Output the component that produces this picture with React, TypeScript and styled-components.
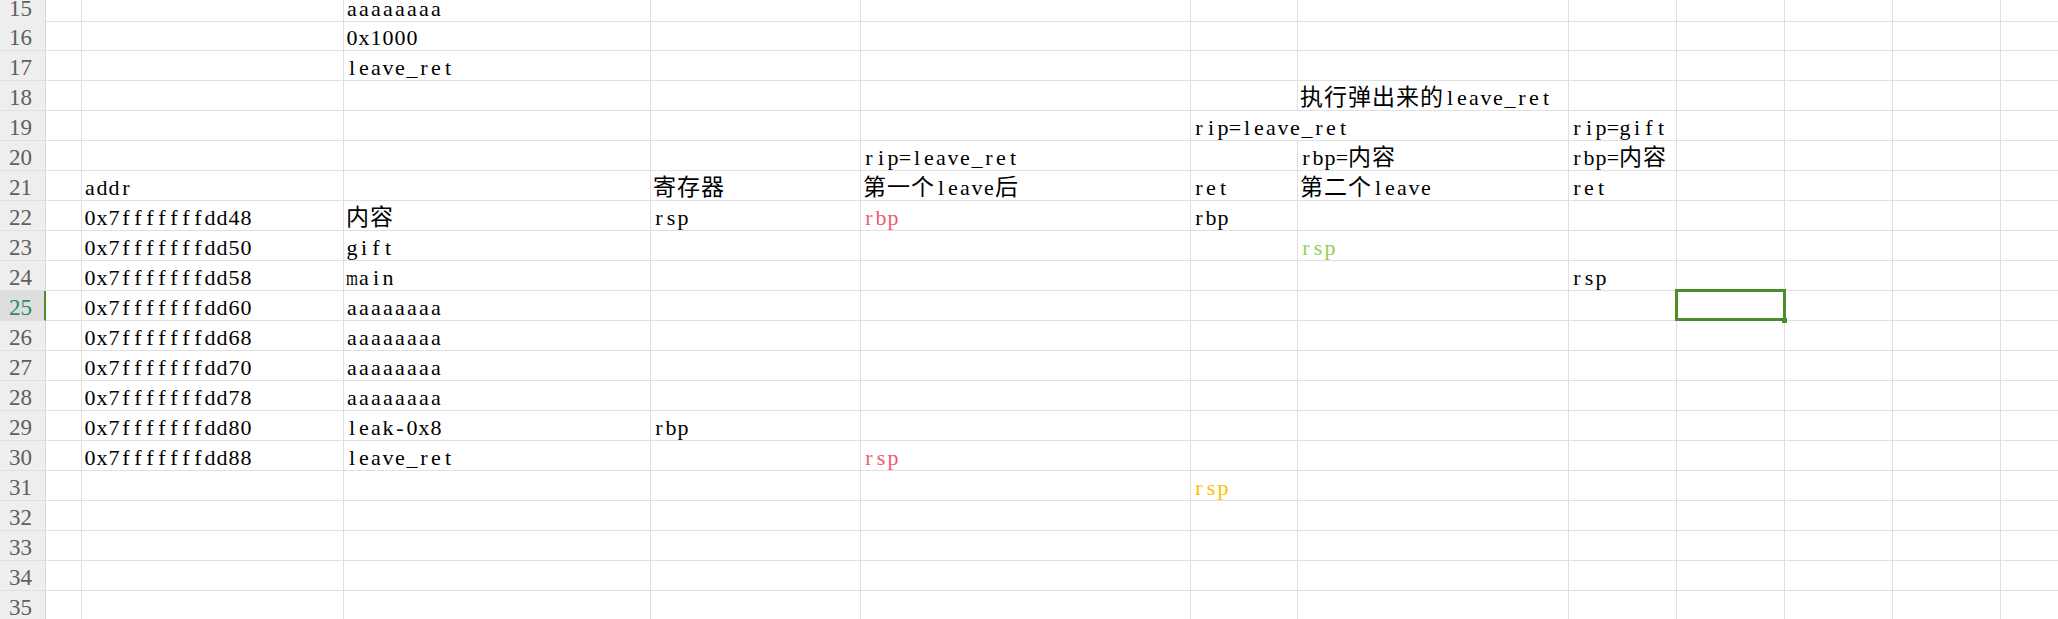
import React from "react";
import styled, { createGlobalStyle, css } from "styled-components";

const GlobalStyle = createGlobalStyle`
    html, body {
        margin: 0;
        padding: 0;
        background: #ffffff;
        overflow: hidden;
    }
`;

// widths of columns A..L, each one includes its 1px right grid line
const COLUMNS = [36, 262, 307, 210, 330, 107, 271, 108, 108, 108, 108, 108];
const HEADER_WIDTH = 46;
const SELECTED = { row: 25, col: 8 };

type Tone = "red" | "green" | "gold";

interface CellData {
    text: string;
    tone?: Tone;
    spill?: boolean;
}

interface RowData {
    n: number;
    cells: Record<number, CellData>;
}

const ROWS: RowData[] = [
    { n: 15, cells: { 2: { text: "aaaaaaaa" } } },
    { n: 16, cells: { 2: { text: "0x1000" } } },
    { n: 17, cells: { 2: { text: "leave_ret" } } },
    { n: 18, cells: { 6: { text: "执行弹出来的leave_ret" } } },
    {
        n: 19,
        cells: {
            5: { text: "rip=leave_ret", spill: true },
            7: { text: "rip=gift" },
        },
    },
    {
        n: 20,
        cells: {
            4: { text: "rip=leave_ret" },
            6: { text: "rbp=内容" },
            7: { text: "rbp=内容" },
        },
    },
    {
        n: 21,
        cells: {
            1: { text: "addr" },
            3: { text: "寄存器" },
            4: { text: "第一个leave后" },
            5: { text: "ret" },
            6: { text: "第二个leave" },
            7: { text: "ret" },
        },
    },
    {
        n: 22,
        cells: {
            1: { text: "0x7fffffffdd48" },
            2: { text: "内容" },
            3: { text: "rsp" },
            4: { text: "rbp", tone: "red" },
            5: { text: "rbp" },
        },
    },
    {
        n: 23,
        cells: {
            1: { text: "0x7fffffffdd50" },
            2: { text: "gift" },
            6: { text: "rsp", tone: "green" },
        },
    },
    {
        n: 24,
        cells: {
            1: { text: "0x7fffffffdd58" },
            2: { text: "main" },
            7: { text: "rsp" },
        },
    },
    { n: 25, cells: { 1: { text: "0x7fffffffdd60" }, 2: { text: "aaaaaaaa" } } },
    { n: 26, cells: { 1: { text: "0x7fffffffdd68" }, 2: { text: "aaaaaaaa" } } },
    { n: 27, cells: { 1: { text: "0x7fffffffdd70" }, 2: { text: "aaaaaaaa" } } },
    { n: 28, cells: { 1: { text: "0x7fffffffdd78" }, 2: { text: "aaaaaaaa" } } },
    {
        n: 29,
        cells: {
            1: { text: "0x7fffffffdd80" },
            2: { text: "leak-0x8" },
            3: { text: "rbp" },
        },
    },
    {
        n: 30,
        cells: {
            1: { text: "0x7fffffffdd88" },
            2: { text: "leave_ret" },
            4: { text: "rsp", tone: "red" },
        },
    },
    { n: 31, cells: { 5: { text: "rsp", tone: "gold" } } },
    { n: 32, cells: {} },
    { n: 33, cells: {} },
    { n: 34, cells: {} },
    { n: 35, cells: {} },
];

const toneColor = (tone?: Tone) => {
    if (tone === "red") return "#ef5a6e";
    if (tone === "green") return "#92d050";
    if (tone === "gold") return "#ffc000";
    return "#000000";
};

const HAN_RUN = /([\u3000-\u303f\u4e00-\u9fff\uff00-\uffef]+)/;
const WIDE = "mwMW";

// the sheet font sets latin letters on a fixed half-width grid and
// Chinese on a full-width one, so lay latin out glyph by glyph
const renderText = (text: string) =>
    text
        .split(HAN_RUN)
        .filter((part) => part.length > 0)
        .map((part, i) =>
            HAN_RUN.test(part) ? (
                <Han key={i}>{part}</Han>
            ) : (
                <React.Fragment key={i}>
                    {Array.from(part).map((ch, j) => (
                        <Glyph key={j} squeeze={WIDE.includes(ch)}>
                            {ch}
                        </Glyph>
                    ))}
                </React.Fragment>
            )
        );

export default function App() {
    return (
        <>
            <GlobalStyle />
            <Sheet>
                {ROWS.map((row, index) => (
                    <Row key={row.n} clipped={index === 0}>
                        <RowHead active={row.n === SELECTED.row}>{row.n}</RowHead>
                        {COLUMNS.map((_, col) => {
                            const cell = row.cells[col];
                            const selected =
                                row.n === SELECTED.row && col === SELECTED.col;
                            return (
                                <Cell
                                    key={col}
                                    spill={!!cell?.spill}
                                    tone={cell?.tone}
                                    selected={selected}
                                >
                                    {cell && <Label>{renderText(cell.text)}</Label>}
                                    {selected && (
                                        <Selection>
                                            <FillHandle />
                                        </Selection>
                                    )}
                                </Cell>
                            );
                        })}
                    </Row>
                ))}
            </Sheet>
        </>
    );
}

const Sheet = styled.div`
    display: flex;
    flex-direction: column;
    width: max-content;
`;

const Row = styled.div.attrs({} as { clipped: boolean })`
    display: grid;
    grid-template-columns: ${HEADER_WIDTH}px ${COLUMNS.map((w) => w + "px").join(" ")};
    height: ${(props) => (props.clipped ? 21 : 30)}px;
`;

const RowHead = styled.div.attrs({} as { active: boolean })`
    box-sizing: border-box;
    display: flex;
    align-items: flex-end;
    padding: 0 0 3px 9px;
    background: #eeeeee;
    border-right: 1px solid #d8d8d8;
    border-bottom: 1px solid #e0e0e0;
    font-family: "Liberation Serif", serif;
    font-size: 23px;
    line-height: 18px;
    color: #5f5f5f;

    ${(props) =>
        props.active &&
        css`
            background: #dedede;
            border-right: 2px solid #4a8f2a;
            color: #2a8a6e;
        `}
`;

const Cell = styled.div.attrs(
    {} as {
        spill: boolean;
        tone?: Tone;
        selected: boolean;
    }
)`
    box-sizing: border-box;
    display: flex;
    align-items: flex-end;
    min-width: 0;
    padding: 0 0 4px 2px;
    border-right: 1px solid ${(props) => (props.spill ? "transparent" : "#e0e0e0")};
    border-bottom: 1px solid #e0e0e0;
    font-family: "Liberation Serif", "Noto Sans CJK SC", serif;
    font-size: 22px;
    line-height: 16px;
    color: ${(props) => toneColor(props.tone)};

    ${(props) =>
        props.selected &&
        css`
            position: relative;
            z-index: 1;
        `}
`;

const Label = styled.span`
    display: block;
    flex: none;
    white-space: nowrap;
`;

const Glyph = styled.span.attrs({} as { squeeze: boolean })`
    display: inline-flex;
    justify-content: center;
    width: 12px;

    ${(props) =>
        props.squeeze &&
        css`
            transform: scaleX(0.7);
        `}
`;

const Han = styled.span`
    font-family: "Noto Sans CJK SC", sans-serif;
    font-size: 23px;
    line-height: 0;
    letter-spacing: 1px;
`;

const Selection = styled.div`
    position: absolute;
    left: -2px;
    right: -2px;
    top: -2px;
    bottom: -1px;
    border: 3px solid #4a8f2a;
`;

const FillHandle = styled.div`
    position: absolute;
    right: -4px;
    bottom: -5px;
    width: 5px;
    height: 5px;
    background: #4a8f2a;
`;
